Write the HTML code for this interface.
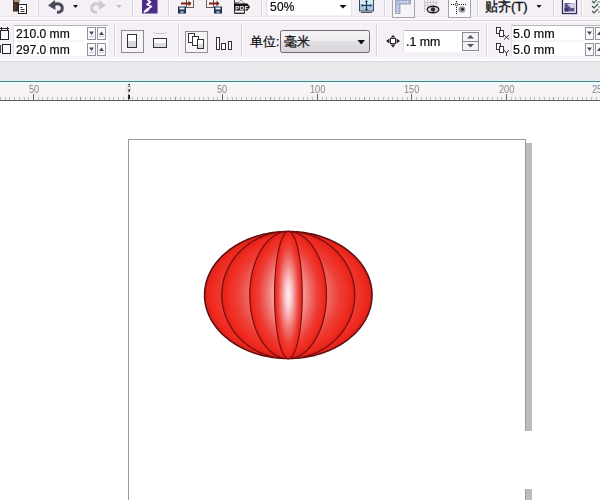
<!DOCTYPE html>
<html><head><meta charset="utf-8">
<style>
*{margin:0;padding:0;box-sizing:border-box}
html,body{width:600px;height:500px;overflow:hidden;background:#fff;font-family:"Liberation Sans",sans-serif}
.abs{position:absolute}
.t{position:absolute;white-space:nowrap;color:#0a0a0a;line-height:1;-webkit-text-stroke:0.2px #0a0a0a}
.rl{position:absolute;font-size:10px;color:#888;top:84.5px;line-height:10px;transform:scaleX(0.92);transform-origin:0 0}
</style></head><body>
<!-- toolbar backgrounds -->
<div class="abs" style="left:0;top:0;width:600px;height:62px;background:#f4f0f5"></div>
<div class="abs" style="left:0;top:16px;width:600px;height:1px;background:#ebe7ec"></div>
<div class="abs" style="left:0;top:17px;width:600px;height:3px;background:#f8f6f9"></div>
<div class="abs" style="left:0;top:20px;width:600px;height:1px;background:#d9d5db"></div>
<div class="abs" style="left:0;top:21px;width:600px;height:1px;background:#fcfbfd"></div>
<div class="abs" style="left:0;top:57px;width:600px;height:1px;background:#fcfbfd"></div>
<div class="abs" style="left:0;top:59px;width:600px;height:2px;background:#fcfbfd"></div>
<div class="abs" style="left:0;top:61px;width:600px;height:1px;background:#dcd8dd"></div>
<div class="abs" style="left:0;top:62px;width:600px;height:19px;background:linear-gradient(#ebe9ea,#eae8ec 55%,#e5ebf0)"></div>
<div class="abs" style="left:0;top:81px;width:600px;height:1px;background:#3c8c8a"></div>
<div class="abs" style="left:0;top:82px;width:600px;height:18px;background:linear-gradient(#f0fafc,#f9f3f7 40%,#f6f1f5)"></div>
<div class="abs" style="left:0;top:100px;width:600px;height:1px;background:#606060"></div>

<svg class="abs" style="left:0;top:0" width="600" height="62" viewBox="0 0 600 62">
<g shape-rendering="crispEdges">
<!-- row1 separators -->
<rect x="37" y="0" width="1" height="16" fill="#fbfafc"/><rect x="38" y="0" width="1" height="16" fill="#d9d5dd"/>
<rect x="132" y="0" width="1" height="16" fill="#d9d5dd"/><rect x="133" y="0" width="1" height="16" fill="#fff"/>
<rect x="168" y="0" width="1" height="16" fill="#d9d5dd"/><rect x="169" y="0" width="1" height="16" fill="#fff"/>
<rect x="261" y="0" width="1" height="16" fill="#d9d5dd"/><rect x="262" y="0" width="1" height="16" fill="#fff"/>
<rect x="384" y="0" width="1" height="16" fill="#d9d5dd"/><rect x="385" y="0" width="1" height="16" fill="#fff"/>
<rect x="477" y="0" width="1" height="16" fill="#d9d5dd"/><rect x="478" y="0" width="1" height="16" fill="#fff"/>
<rect x="553" y="0" width="1" height="16" fill="#d9d5dd"/><rect x="554" y="0" width="1" height="16" fill="#fff"/>
<rect x="581" y="0" width="1" height="16" fill="#d9d5dd"/><rect x="582" y="0" width="1" height="16" fill="#fff"/>
<!-- row2 separators -->
<rect x="114" y="23" width="1" height="34" fill="#d9d5dd"/><rect x="115" y="23" width="1" height="34" fill="#fff"/>
<rect x="178" y="23" width="1" height="34" fill="#d9d5dd"/><rect x="179" y="23" width="1" height="34" fill="#fff"/>
<rect x="241" y="23" width="1" height="34" fill="#d9d5dd"/><rect x="242" y="23" width="1" height="34" fill="#fff"/>
<rect x="376" y="23" width="1" height="34" fill="#d9d5dd"/><rect x="377" y="23" width="1" height="34" fill="#fff"/>
<rect x="486" y="23" width="1" height="34" fill="#d9d5dd"/><rect x="487" y="23" width="1" height="34" fill="#fff"/>
</g>

<!-- paste icon -->
<rect x="13" y="0" width="6" height="11.5" fill="#3e2a22"/>
<rect x="14" y="0" width="6" height="2" fill="#a8987a"/>
<rect x="14" y="4" width="2" height="6" fill="#5a3a2e"/>
<rect x="18.5" y="4.5" width="8" height="9" fill="#fff" stroke="#222" stroke-width="1"/>
<rect x="20.5" y="7" width="2" height="1" fill="#333"/>
<rect x="20.5" y="9" width="4" height="1" fill="#333"/>
<rect x="20.5" y="11" width="4" height="1" fill="#333"/>

<!-- undo -->
<path d="M54 4.8 C57 3 62 3.5 62.3 8 C62.5 11 60 12.5 57 12.3" stroke="#4b4a5c" stroke-width="3" fill="none"/>
<path d="M48 5.5 L55 0 L55.5 10 Z" fill="#4b4a5c"/>
<path d="M73 5 L78 5 L75.5 8 Z" fill="#111"/>
<!-- redo gray -->
<path d="M100 4.8 C97 3 92 3.5 91.7 8 C91.5 11 94 12.5 97 12.3" stroke="#cdcad2" stroke-width="3" fill="none"/>
<path d="M106 5.5 L99 0 L98.5 10 Z" fill="#cdcad2"/>
<path d="M116.5 5 L121.5 5 L119 8 Z" fill="#bdbac2"/>

<!-- purple icon -->
<rect x="142" y="0" width="15.5" height="13.5" fill="#4d2a86"/>
<path d="M147.5 0 L150.5 2 L147 4.5 L151.5 6.5 L146 10 L144 12.5" fill="none" stroke="#fff" stroke-width="1.6" stroke-linejoin="round"/>
<path d="M143 12.5 L150 8.5 L148 11.5 Z" fill="#fff"/>

<!-- import -->
<rect x="186.5" y="-1" width="7" height="8.5" fill="#f8f4f4" stroke="#6a5a5a" stroke-width="1"/>
<path d="M181 2.5 L188.5 2.5 L188.5 0.5 L191.5 3.5 L188.5 6.5 L188.5 4.5 L181 4.5 Z" fill="#7a2416"/>
<rect x="178" y="6.5" width="8" height="7" fill="#1e3058"/>
<rect x="179.5" y="7.5" width="5" height="2" fill="#e8eef8"/>
<rect x="180.5" y="11" width="3" height="2" fill="#9aa8c0"/>
<!-- export -->
<rect x="206.5" y="-1" width="7" height="8.5" fill="#f8f4f4" stroke="#6a5a5a" stroke-width="1"/>
<path d="M209 2.5 L216.5 2.5 L216.5 0.5 L219.5 3.5 L216.5 6.5 L216.5 4.5 L209 4.5 Z" fill="#7a2416"/>
<rect x="214" y="6.5" width="8" height="7" fill="#1e3058"/>
<rect x="215.5" y="7.5" width="5" height="2" fill="#e8eef8"/>
<rect x="216.5" y="11" width="3" height="2" fill="#9aa8c0"/>
<!-- pdf -->
<path d="M234.5 -1 L234.5 13.5 L244.5 13.5 L244.5 10 M234.5 3 L238 3 L241 0 L245 4" fill="none" stroke="#2a2a2a" stroke-width="0.9"/>
<path d="M238 3 L241 0 L244 3 Z" fill="#f0f0f0" stroke="#999" stroke-width="0.5"/>
<path d="M234 3.5 L247.5 3.5 L250 7 L247.5 10.5 L234 10.5 Z" fill="#141414"/>
<text x="235.3" y="9.6" font-family="Liberation Sans" font-weight="bold" font-size="6" fill="#fff" letter-spacing="0.4">PDF</text>
<rect x="235" y="11" width="9" height="1.6" fill="#fff"/>
<rect x="234.5" y="12.6" width="10" height="1" fill="#2a2a2a"/>

<!-- zoom combo -->
<rect x="268" y="0" width="83" height="16" fill="#fff"/>
<rect x="266.5" y="-1" width="85" height="17" fill="none" stroke="#e6e3e8" stroke-width="1"/>
<path d="M339.5 5 L346.5 5 L343 8.5 Z" fill="#111"/>

<!-- crosshair icon -->
<rect x="359.5" y="0" width="14" height="11" fill="#a9c8dc" stroke="#3a4a5a" stroke-width="1"/>
<rect x="360" y="0" width="13" height="4" fill="#d8e8f2"/>
<path d="M362 5.5 L371 5.5 M366.5 1 L366.5 10" stroke="#1a3a5a" stroke-width="1.2"/>
<path d="M361 5.5 L363 4 L363 7 Z M372 5.5 L370 4 L370 7 Z M366.5 0 L365 2 L368 2 Z M366.5 11 L365 9 L368 9 Z" fill="#1a3a5a"/>
<rect x="361" y="12" width="11" height="1" fill="#555"/>

<!-- pressed btn ruler -->
<rect x="392.5" y="-1" width="22" height="18.5" fill="#f7f4f8" stroke="#a6a3aa" stroke-width="1"/>
<path d="M395.5 0 L395.5 13.5 L400 13.5 L400 4 L410.5 4 L410.5 0 Z" fill="#b2bed8" stroke="#7d8bab" stroke-width="0.7"/>
<g fill="#e8ecf6"><rect x="401" y="1" width="1" height="2"/><rect x="404" y="1" width="1" height="2"/><rect x="407" y="1" width="1" height="2"/><rect x="396.5" y="6" width="2" height="1"/><rect x="396.5" y="9" width="2" height="1"/><rect x="396.5" y="12" width="2" height="1"/></g>
<!-- eye -->
<g fill="#c8c6ce"><rect x="424" y="0" width="1" height="12"/><rect x="427" y="0" width="1" height="6"/><rect x="430" y="0" width="1" height="5"/><rect x="433" y="0" width="1" height="5"/><rect x="436" y="0" width="1" height="5"/><rect x="424" y="2" width="14" height="1"/><rect x="424" y="5" width="5" height="1"/><rect x="424" y="8" width="2" height="1"/></g>
<ellipse cx="433" cy="9.5" rx="5.8" ry="3.3" fill="#d8d8dc" stroke="#1e1e1e" stroke-width="1.4"/>
<circle cx="433" cy="9.5" r="2.2" fill="#2a2a2a"/>
<!-- pressed btn dotted -->
<rect x="448.5" y="-1" width="22" height="18.5" fill="#fbfafc" stroke="#a6a3aa" stroke-width="1"/>
<g fill="#1a1a1a"><rect x="451" y="4" width="1" height="1"/><rect x="453" y="4" width="1" height="1"/><rect x="459" y="4" width="1" height="1"/><rect x="461" y="4" width="1" height="1"/><rect x="463" y="4" width="1" height="1"/><rect x="465" y="4" width="1" height="1"/>
<rect x="456" y="1" width="1" height="1"/><rect x="456" y="7" width="1" height="1"/><rect x="456" y="9" width="1" height="1"/><rect x="456" y="11" width="1" height="1"/><rect x="456" y="13" width="1" height="1"/></g>
<circle cx="456.5" cy="4.5" r="1.3" fill="none" stroke="#222" stroke-width="0.8"/>
<circle cx="462" cy="9.5" r="3.3" fill="#9a9a9e" filter="url(#sb)"/>
<circle cx="462.5" cy="9.3" r="1.4" fill="#1a1a1a" filter="url(#sb)"/>
<defs><filter id="sb"><feGaussianBlur stdDeviation="0.6"/></filter></defs>
<!-- dropdown of snap -->
<path d="M536.5 5 L541.5 5 L539 8 Z" fill="#111"/>
<!-- purple image icon -->
<rect x="562.5" y="-1" width="14" height="14.5" fill="#fff" stroke="#2e2a5a" stroke-width="1.3"/>
<rect x="564.5" y="3" width="10" height="8.5" fill="#5a5690"/>
<path d="M567 4 L574.5 3 L574.5 8 L571 8 Z" fill="#d4d4ea"/>
<rect x="564.5" y="8" width="4" height="3.5" fill="#3e3a70"/>
<!-- green checklist -->
<g stroke="#3c5a44" stroke-width="1.1" fill="none">
<path d="M592 1 L594 3 L597 -1"/><path d="M592 6 L594 8 L598 4"/><path d="M592 11 L594 13 L598 9"/></g>
<g fill="#6a8a70"><rect x="597" y="1.5" width="3" height="1"/><rect x="598" y="6.5" width="2" height="1"/><rect x="598" y="11.5" width="2" height="1"/></g>

<!-- ROW2 -->
<!-- page size icons -->
<rect x="0.5" y="30.5" width="8" height="9" fill="#f8f7fb" stroke="#222" stroke-width="1"/>
<rect x="0" y="28" width="9" height="1" fill="#222"/>
<rect x="1" y="27" width="1" height="3" fill="#222"/><rect x="7" y="27" width="1" height="3" fill="#222"/>
<rect x="2.5" y="44.5" width="8" height="9" fill="#f8f7fb" stroke="#222" stroke-width="1"/>
<rect x="0" y="45" width="1" height="8" fill="#444"/>

<!-- size fields -->
<rect x="13" y="25" width="95" height="31" fill="#fff"/>
<rect x="13" y="25" width="95" height="1" fill="#b8b6ba"/>
<rect x="13" y="25" width="1" height="31" fill="#e4e2e6"/>
<rect x="14" y="40.5" width="70" height="1" fill="#f0eef2"/>
<!-- spin boxes -->
<g fill="#fbfbfd" stroke="#94939c" stroke-width="1">
<rect x="87.5" y="27.5" width="8" height="12"/><rect x="97.5" y="27.5" width="8" height="12"/>
<rect x="87.5" y="43.5" width="8" height="12"/><rect x="97.5" y="43.5" width="8" height="12"/>
</g>
<g fill="#4a4a5c">
<path d="M89 31.5 L94 31.5 L91.5 35 Z"/><path d="M99 35 L104 35 L101.5 31.5 Z"/>
<path d="M89 47.5 L94 47.5 L91.5 51 Z"/><path d="M99 51 L104 51 L101.5 47.5 Z"/>
</g>
<g fill="#c8c8d4"><rect x="89" y="36" width="5" height="1"/><rect x="99" y="36" width="5" height="1"/><rect x="89" y="52" width="5" height="1"/><rect x="99" y="52" width="5" height="1"/></g>

<!-- portrait pressed -->
<rect x="121.5" y="30.5" width="22" height="22" fill="#f7f4f8" stroke="#8e8c92" stroke-width="1"/>
<rect x="127.5" y="34.5" width="9" height="13" fill="#fff" stroke="#333" stroke-width="1"/>
<rect x="128" y="41" width="8" height="6" fill="#d8d8e0"/>
<!-- landscape -->
<rect x="153.5" y="38.5" width="13" height="9" fill="#fff" stroke="#333" stroke-width="1"/>
<rect x="154" y="43" width="12" height="4" fill="#dcdce4"/>
<g fill="#c8c8d0"><rect x="154" y="32" width="1" height="2"/><rect x="165" y="32" width="1" height="2"/><rect x="156" y="33" width="8" height="1"/></g>

<!-- pages pressed -->
<rect x="185.5" y="31.5" width="22" height="21" fill="#f7f4f8" stroke="#8e8c92" stroke-width="1"/>
<rect x="188.5" y="33.5" width="6" height="9" fill="#fff" stroke="#333" stroke-width="1"/>
<rect x="192.5" y="36.5" width="6" height="9" fill="#fff" stroke="#333" stroke-width="1"/>
<rect x="197.5" y="39.5" width="6" height="9" fill="#fff" stroke="#333" stroke-width="1"/>
<rect x="198" y="44" width="5" height="4" fill="#d8d8e0"/>
<!-- bars -->
<g fill="#fff" stroke="#333" stroke-width="1">
<rect x="216.5" y="37.5" width="3" height="12"/><rect x="221.5" y="43.5" width="4" height="6"/><rect x="228.5" y="41.5" width="3" height="8"/></g>

<!-- units combo -->
<rect x="280.5" y="30.5" width="89" height="22" rx="2" ry="2" fill="url(#cg)" stroke="#6c6a70" stroke-width="1"/>
<defs><linearGradient id="cg" x1="0" y1="0" x2="0" y2="1"><stop offset="0" stop-color="#f6f4f6"/><stop offset="0.45" stop-color="#efedf0"/><stop offset="0.5" stop-color="#e2e0e3"/><stop offset="1" stop-color="#d6d4d8"/></linearGradient></defs>
<path d="M357.5 40 L365 40 L361.25 44.5 Z" fill="#111"/>

<!-- nudge icon -->
<rect x="390.5" y="38.5" width="5" height="5" fill="#fff" stroke="#333" stroke-width="1"/>
<g fill="#222"><path d="M393 35 L390.5 37.5 L395.5 37.5 Z"/><path d="M393 47.5 L390.5 44.5 L395.5 44.5 Z"/><path d="M386 41 L389.5 38.5 L389.5 43.5 Z"/><path d="M400 41 L396.5 38.5 L396.5 43.5 Z"/></g>

<!-- nudge field -->
<rect x="403" y="30" width="77" height="22" fill="#fff"/>
<rect x="403" y="30" width="77" height="1" fill="#b8b6ba"/>
<rect x="403" y="30" width="1" height="22" fill="#e4e2e6"/>
<rect x="462.5" y="32.5" width="16" height="18" fill="#f3f2f5" stroke="#8a8890" stroke-width="1"/>
<rect x="463" y="41" width="15" height="1" fill="#8a8890"/>
<path d="M467 38.5 L474 38.5 L470.5 35 Z" fill="#555"/>
<path d="M467 44 L474 44 L470.5 47.5 Z" fill="#555"/>

<!-- dup icons -->
<g fill="#fff" stroke="#222" stroke-width="0.9">
<rect x="496.5" y="27.5" width="4" height="6"/><rect x="499.5" y="30.5" width="4" height="6"/>
<rect x="496.5" y="43.5" width="4" height="6"/><rect x="499.5" y="46.5" width="4" height="6"/></g>
<path d="M504 35 L509 39.5 M509 35 L504 39.5" stroke="#222" stroke-width="0.9" fill="none"/>
<path d="M504 50 L506.5 53 L509 50 M506.5 53 L506.5 56" stroke="#222" stroke-width="0.9" fill="none"/>

<!-- dup fields -->
<rect x="511" y="25" width="89" height="31" fill="#fff"/>
<rect x="511" y="25" width="89" height="1" fill="#b8b6ba"/>
<rect x="511" y="25" width="1" height="31" fill="#e4e2e6"/>
<rect x="512" y="40.5" width="72" height="1" fill="#f0eef2"/>
<g fill="#fbfbfd" stroke="#94939c" stroke-width="1">
<rect x="585.5" y="27.5" width="8" height="12"/><rect x="595.5" y="27.5" width="8" height="12"/>
<rect x="585.5" y="43.5" width="8" height="12"/><rect x="595.5" y="43.5" width="8" height="12"/>
</g>
<g fill="#4a4a5c">
<path d="M587 31.5 L592 31.5 L589.5 35 Z"/><path d="M597 35 L602 35 L599.5 31.5 Z"/>
<path d="M587 47.5 L592 47.5 L589.5 51 Z"/><path d="M597 51 L602 51 L599.5 47.5 Z"/>
</g>
</svg>

<!-- texts -->
<div class="t" style="left:269.5px;top:0px;font-size:13px;transform:scaleX(0.92);transform-origin:0 0;letter-spacing:0.3px">50%</div>
<div class="t" style="left:485px;top:0px;font-size:13px;-webkit-text-stroke:0.35px #151515">贴齐(T)</div>
<div class="t" style="left:15.5px;top:27px;font-size:13px;transform:scale(0.93,1.04);transform-origin:0 0">210.0 mm</div>
<div class="t" style="left:15.5px;top:42.5px;font-size:13px;transform:scale(0.93,1.04);transform-origin:0 0">297.0 mm</div>
<div class="t" style="left:250px;top:35.5px;font-size:12.5px;-webkit-text-stroke:0.25px #151515">单位:</div>
<div class="t" style="left:284px;top:35.5px;font-size:12.5px;-webkit-text-stroke:0.25px #151515">毫米</div>
<div class="t" style="left:406px;top:34.5px;font-size:13px;transform:scale(0.95,1.04);transform-origin:0 0">.1 mm</div>
<div class="t" style="left:513px;top:27px;font-size:13px;transform:scale(0.96,1.04);transform-origin:0 0">5.0 mm</div>
<div class="t" style="left:513px;top:42.5px;font-size:13px;transform:scale(0.96,1.04);transform-origin:0 0">5.0 mm</div>

<!-- ruler -->
<svg class="abs" style="left:0;top:82px" width="600" height="19" viewBox="0 0 600 19">
<g shape-rendering="crispEdges">
<rect x="0" y="15" width="1" height="3" fill="#bdbdbd"/>
<rect x="5" y="15" width="1" height="3" fill="#bdbdbd"/>
<rect x="9" y="15" width="1" height="3" fill="#bdbdbd"/>
<rect x="14" y="15" width="1" height="3" fill="#bdbdbd"/>
<rect x="19" y="15" width="1" height="3" fill="#bdbdbd"/>
<rect x="24" y="15" width="1" height="3" fill="#bdbdbd"/>
<rect x="28" y="15" width="1" height="3" fill="#bdbdbd"/>
<rect x="33" y="12" width="1" height="6" fill="#6a6a6a"/>
<rect x="38" y="15" width="1" height="3" fill="#bdbdbd"/>
<rect x="42" y="15" width="1" height="3" fill="#bdbdbd"/>
<rect x="47" y="15" width="1" height="3" fill="#bdbdbd"/>
<rect x="52" y="15" width="1" height="3" fill="#bdbdbd"/>
<rect x="57" y="15" width="1" height="3" fill="#bdbdbd"/>
<rect x="61" y="15" width="1" height="3" fill="#bdbdbd"/>
<rect x="66" y="15" width="1" height="3" fill="#bdbdbd"/>
<rect x="71" y="15" width="1" height="3" fill="#bdbdbd"/>
<rect x="76" y="15" width="1" height="3" fill="#bdbdbd"/>
<rect x="80" y="15" width="1" height="3" fill="#999"/>
<rect x="85" y="15" width="1" height="3" fill="#bdbdbd"/>
<rect x="90" y="15" width="1" height="3" fill="#bdbdbd"/>
<rect x="94" y="15" width="1" height="3" fill="#bdbdbd"/>
<rect x="99" y="15" width="1" height="3" fill="#bdbdbd"/>
<rect x="104" y="15" width="1" height="3" fill="#bdbdbd"/>
<rect x="109" y="15" width="1" height="3" fill="#bdbdbd"/>
<rect x="113" y="15" width="1" height="3" fill="#bdbdbd"/>
<rect x="118" y="15" width="1" height="3" fill="#bdbdbd"/>
<rect x="123" y="15" width="1" height="3" fill="#bdbdbd"/>
<rect x="128" y="12" width="1" height="6" fill="#6a6a6a"/>
<rect x="132" y="15" width="1" height="3" fill="#bdbdbd"/>
<rect x="137" y="15" width="1" height="3" fill="#bdbdbd"/>
<rect x="142" y="15" width="1" height="3" fill="#bdbdbd"/>
<rect x="147" y="15" width="1" height="3" fill="#bdbdbd"/>
<rect x="151" y="15" width="1" height="3" fill="#bdbdbd"/>
<rect x="156" y="15" width="1" height="3" fill="#bdbdbd"/>
<rect x="161" y="15" width="1" height="3" fill="#bdbdbd"/>
<rect x="165" y="15" width="1" height="3" fill="#bdbdbd"/>
<rect x="170" y="15" width="1" height="3" fill="#bdbdbd"/>
<rect x="175" y="15" width="1" height="3" fill="#999"/>
<rect x="180" y="15" width="1" height="3" fill="#bdbdbd"/>
<rect x="184" y="15" width="1" height="3" fill="#bdbdbd"/>
<rect x="189" y="15" width="1" height="3" fill="#bdbdbd"/>
<rect x="194" y="15" width="1" height="3" fill="#bdbdbd"/>
<rect x="199" y="15" width="1" height="3" fill="#bdbdbd"/>
<rect x="203" y="15" width="1" height="3" fill="#bdbdbd"/>
<rect x="208" y="15" width="1" height="3" fill="#bdbdbd"/>
<rect x="213" y="15" width="1" height="3" fill="#bdbdbd"/>
<rect x="217" y="15" width="1" height="3" fill="#bdbdbd"/>
<rect x="222" y="12" width="1" height="6" fill="#6a6a6a"/>
<rect x="227" y="15" width="1" height="3" fill="#bdbdbd"/>
<rect x="232" y="15" width="1" height="3" fill="#bdbdbd"/>
<rect x="236" y="15" width="1" height="3" fill="#bdbdbd"/>
<rect x="241" y="15" width="1" height="3" fill="#bdbdbd"/>
<rect x="246" y="15" width="1" height="3" fill="#bdbdbd"/>
<rect x="251" y="15" width="1" height="3" fill="#bdbdbd"/>
<rect x="255" y="15" width="1" height="3" fill="#bdbdbd"/>
<rect x="260" y="15" width="1" height="3" fill="#bdbdbd"/>
<rect x="265" y="15" width="1" height="3" fill="#bdbdbd"/>
<rect x="270" y="15" width="1" height="3" fill="#999"/>
<rect x="274" y="15" width="1" height="3" fill="#bdbdbd"/>
<rect x="279" y="15" width="1" height="3" fill="#bdbdbd"/>
<rect x="284" y="15" width="1" height="3" fill="#bdbdbd"/>
<rect x="288" y="15" width="1" height="3" fill="#bdbdbd"/>
<rect x="293" y="15" width="1" height="3" fill="#bdbdbd"/>
<rect x="298" y="15" width="1" height="3" fill="#bdbdbd"/>
<rect x="303" y="15" width="1" height="3" fill="#bdbdbd"/>
<rect x="307" y="15" width="1" height="3" fill="#bdbdbd"/>
<rect x="312" y="15" width="1" height="3" fill="#bdbdbd"/>
<rect x="317" y="12" width="1" height="6" fill="#6a6a6a"/>
<rect x="322" y="15" width="1" height="3" fill="#bdbdbd"/>
<rect x="326" y="15" width="1" height="3" fill="#bdbdbd"/>
<rect x="331" y="15" width="1" height="3" fill="#bdbdbd"/>
<rect x="336" y="15" width="1" height="3" fill="#bdbdbd"/>
<rect x="340" y="15" width="1" height="3" fill="#bdbdbd"/>
<rect x="345" y="15" width="1" height="3" fill="#bdbdbd"/>
<rect x="350" y="15" width="1" height="3" fill="#bdbdbd"/>
<rect x="355" y="15" width="1" height="3" fill="#bdbdbd"/>
<rect x="359" y="15" width="1" height="3" fill="#bdbdbd"/>
<rect x="364" y="15" width="1" height="3" fill="#999"/>
<rect x="369" y="15" width="1" height="3" fill="#bdbdbd"/>
<rect x="374" y="15" width="1" height="3" fill="#bdbdbd"/>
<rect x="378" y="15" width="1" height="3" fill="#bdbdbd"/>
<rect x="383" y="15" width="1" height="3" fill="#bdbdbd"/>
<rect x="388" y="15" width="1" height="3" fill="#bdbdbd"/>
<rect x="392" y="15" width="1" height="3" fill="#bdbdbd"/>
<rect x="397" y="15" width="1" height="3" fill="#bdbdbd"/>
<rect x="402" y="15" width="1" height="3" fill="#bdbdbd"/>
<rect x="407" y="15" width="1" height="3" fill="#bdbdbd"/>
<rect x="411" y="12" width="1" height="6" fill="#6a6a6a"/>
<rect x="416" y="15" width="1" height="3" fill="#bdbdbd"/>
<rect x="421" y="15" width="1" height="3" fill="#bdbdbd"/>
<rect x="426" y="15" width="1" height="3" fill="#bdbdbd"/>
<rect x="430" y="15" width="1" height="3" fill="#bdbdbd"/>
<rect x="435" y="15" width="1" height="3" fill="#bdbdbd"/>
<rect x="440" y="15" width="1" height="3" fill="#bdbdbd"/>
<rect x="445" y="15" width="1" height="3" fill="#bdbdbd"/>
<rect x="449" y="15" width="1" height="3" fill="#bdbdbd"/>
<rect x="454" y="15" width="1" height="3" fill="#bdbdbd"/>
<rect x="459" y="15" width="1" height="3" fill="#999"/>
<rect x="463" y="15" width="1" height="3" fill="#bdbdbd"/>
<rect x="468" y="15" width="1" height="3" fill="#bdbdbd"/>
<rect x="473" y="15" width="1" height="3" fill="#bdbdbd"/>
<rect x="478" y="15" width="1" height="3" fill="#bdbdbd"/>
<rect x="482" y="15" width="1" height="3" fill="#bdbdbd"/>
<rect x="487" y="15" width="1" height="3" fill="#bdbdbd"/>
<rect x="492" y="15" width="1" height="3" fill="#bdbdbd"/>
<rect x="497" y="15" width="1" height="3" fill="#bdbdbd"/>
<rect x="501" y="15" width="1" height="3" fill="#bdbdbd"/>
<rect x="506" y="12" width="1" height="6" fill="#6a6a6a"/>
<rect x="511" y="15" width="1" height="3" fill="#bdbdbd"/>
<rect x="515" y="15" width="1" height="3" fill="#bdbdbd"/>
<rect x="520" y="15" width="1" height="3" fill="#bdbdbd"/>
<rect x="525" y="15" width="1" height="3" fill="#bdbdbd"/>
<rect x="530" y="15" width="1" height="3" fill="#bdbdbd"/>
<rect x="534" y="15" width="1" height="3" fill="#bdbdbd"/>
<rect x="539" y="15" width="1" height="3" fill="#bdbdbd"/>
<rect x="544" y="15" width="1" height="3" fill="#bdbdbd"/>
<rect x="549" y="15" width="1" height="3" fill="#bdbdbd"/>
<rect x="553" y="15" width="1" height="3" fill="#999"/>
<rect x="558" y="15" width="1" height="3" fill="#bdbdbd"/>
<rect x="563" y="15" width="1" height="3" fill="#bdbdbd"/>
<rect x="567" y="15" width="1" height="3" fill="#bdbdbd"/>
<rect x="572" y="15" width="1" height="3" fill="#bdbdbd"/>
<rect x="577" y="15" width="1" height="3" fill="#bdbdbd"/>
<rect x="582" y="15" width="1" height="3" fill="#bdbdbd"/>
<rect x="586" y="15" width="1" height="3" fill="#bdbdbd"/>
<rect x="591" y="15" width="1" height="3" fill="#bdbdbd"/>
<rect x="596" y="15" width="1" height="3" fill="#bdbdbd"/>
</g>
<g fill="#111"><rect x="128.5" y="2" width="1.5" height="3"/><rect x="128.5" y="7" width="1.5" height="3"/><rect x="128.5" y="13" width="1.5" height="4"/></g>
</svg>
<div class="rl" style="left:29px">50</div>
<div class="rl" style="left:126px;color:#e0d0d8">0</div>
<div class="rl" style="left:217px">50</div>
<div class="rl" style="left:310px">100</div>
<div class="rl" style="left:404px">150</div>
<div class="rl" style="left:499px">200</div>
<div class="rl" style="left:592px">25</div>

<!-- page -->
<div class="abs" style="left:128px;top:139px;width:398px;height:400px;border:1px solid #9a9a9a;background:#fff"></div>
<div class="abs" style="left:526px;top:143px;width:6px;height:400px;background:#bcbcbc"></div>
<div class="abs" style="left:440px;top:431px;width:160px;height:58px;background:#fff"></div>

<svg class="abs" style="left:0;top:0" width="600" height="500" viewBox="0 0 600 500">
<defs>
<radialGradient id="g" cx="0.5" cy="0.5" r="0.5">
<stop offset="0" stop-color="#fff0f4"/>
<stop offset="0.2" stop-color="#fcd0d4"/>
<stop offset="0.38" stop-color="#f5a0a0"/>
<stop offset="0.58" stop-color="#ef6c68"/>
<stop offset="0.78" stop-color="#ee3c34"/>
<stop offset="0.92" stop-color="#f02a20"/>
<stop offset="0.97" stop-color="#e4261e"/>
<stop offset="1" stop-color="#b81a16"/>
</radialGradient>
</defs>
<filter id="bl" x="-10%" y="-10%" width="120%" height="120%"><feGaussianBlur stdDeviation="0.35"/></filter>
<g filter="url(#bl)">
<g stroke="#760a0a" stroke-width="1.05">
<path d="M372.10 295.00 L372.07 296.66 L371.99 298.33 L371.84 299.99 L371.64 301.65 L371.38 303.30 L371.07 304.95 L370.70 306.59 L370.27 308.22 L369.78 309.85 L369.24 311.46 L368.65 313.06 L368.00 314.65 L367.29 316.23 L366.53 317.79 L365.72 319.34 L364.86 320.87 L363.94 322.38 L362.97 323.87 L361.94 325.35 L360.87 326.80 L359.75 328.23 L358.58 329.64 L357.36 331.02 L356.10 332.38 L354.78 333.72 L353.42 335.02 L352.02 336.30 L350.58 337.56 L349.09 338.78 L347.56 339.97 L345.98 341.13 L344.37 342.26 L342.72 343.36 L341.04 344.43 L339.31 345.46 L337.56 346.45 L335.76 347.41 L333.94 348.34 L332.09 349.23 L330.20 350.08 L328.29 350.89 L326.34 351.67 L324.38 352.40 L322.38 353.10 L320.37 353.76 L318.33 354.38 L316.27 354.95 L314.20 355.49 L312.10 355.98 L309.99 356.43 L307.86 356.84 L305.72 357.21 L303.57 357.54 L301.41 357.82 L299.24 358.06 L297.06 358.25 L294.87 358.40 L292.69 358.51 L290.49 358.58 L288.30 358.60 L286.11 358.58 L283.91 358.51 L281.73 358.40 L279.54 358.25 L277.36 358.06 L275.19 357.82 L273.03 357.54 L270.88 357.21 L268.74 356.84 L266.61 356.43 L264.50 355.98 L262.40 355.49 L260.33 354.95 L258.27 354.38 L256.23 353.76 L254.22 353.10 L252.22 352.40 L250.26 351.67 L248.31 350.89 L246.40 350.08 L244.51 349.23 L242.66 348.34 L240.84 347.41 L239.04 346.45 L237.29 345.46 L235.56 344.43 L233.88 343.36 L232.23 342.26 L230.62 341.13 L229.04 339.97 L227.51 338.78 L226.02 337.56 L224.58 336.30 L223.18 335.02 L221.82 333.72 L220.50 332.38 L219.24 331.02 L218.02 329.64 L216.85 328.23 L215.73 326.80 L214.66 325.35 L213.63 323.87 L212.66 322.38 L211.74 320.87 L210.88 319.34 L210.07 317.79 L209.31 316.23 L208.60 314.65 L207.95 313.06 L207.36 311.46 L206.82 309.85 L206.33 308.22 L205.90 306.59 L205.53 304.95 L205.22 303.30 L204.96 301.65 L204.76 299.99 L204.61 298.33 L204.53 296.66 L204.50 295.00 L204.53 293.34 L204.61 291.67 L204.76 290.01 L204.96 288.35 L205.22 286.70 L205.53 285.05 L205.90 283.41 L206.33 281.78 L206.82 280.15 L207.36 278.54 L207.95 276.94 L208.60 275.35 L209.31 273.77 L210.07 272.21 L210.88 270.66 L211.74 269.13 L212.66 267.62 L213.63 266.13 L214.66 264.65 L215.73 263.20 L216.85 261.77 L218.02 260.36 L219.24 258.98 L220.50 257.62 L221.82 256.28 L223.18 254.98 L224.58 253.70 L226.02 252.44 L227.51 251.22 L229.04 250.03 L230.62 248.87 L232.23 247.74 L233.88 246.64 L235.56 245.57 L237.29 244.54 L239.04 243.55 L240.84 242.59 L242.66 241.66 L244.51 240.77 L246.40 239.92 L248.31 239.11 L250.26 238.33 L252.22 237.60 L254.22 236.90 L256.23 236.24 L258.27 235.62 L260.33 235.05 L262.40 234.51 L264.50 234.02 L266.61 233.57 L268.74 233.16 L270.88 232.79 L273.03 232.46 L275.19 232.18 L277.36 231.94 L279.54 231.75 L281.73 231.60 L283.91 231.49 L286.11 231.42 L288.30 231.40 L290.49 231.42 L292.69 231.49 L294.87 231.60 L297.06 231.75 L299.24 231.94 L301.41 232.18 L303.57 232.46 L305.72 232.79 L307.86 233.16 L309.99 233.57 L312.10 234.02 L314.20 234.51 L316.27 235.05 L318.33 235.62 L320.37 236.24 L322.38 236.90 L324.38 237.60 L326.34 238.33 L328.29 239.11 L330.20 239.92 L332.09 240.77 L333.94 241.66 L335.76 242.59 L337.56 243.55 L339.31 244.54 L341.04 245.57 L342.72 246.64 L344.37 247.74 L345.98 248.87 L347.56 250.03 L349.09 251.22 L350.58 252.44 L352.02 253.70 L353.42 254.98 L354.78 256.28 L356.10 257.62 L357.36 258.98 L358.58 260.36 L359.75 261.77 L360.87 263.20 L361.94 264.65 L362.97 266.13 L363.94 267.62 L364.86 269.13 L365.72 270.66 L366.53 272.21 L367.29 273.77 L368.00 275.35 L368.65 276.94 L369.24 278.54 L369.78 280.15 L370.27 281.78 L370.70 283.41 L371.07 285.05 L371.38 286.70 L371.64 288.35 L371.84 290.01 L371.99 291.67 L372.07 293.34 Z" fill="url(#g)" stroke="#5a0c0c" stroke-width="1.4"/>
<path d="M354.90 295.00 L354.88 296.66 L354.81 298.33 L354.69 299.99 L354.54 301.65 L354.33 303.30 L354.08 304.95 L353.78 306.59 L353.44 308.22 L353.06 309.85 L352.63 311.46 L352.16 313.06 L351.64 314.65 L351.08 316.23 L350.48 317.79 L349.83 319.34 L349.14 320.87 L348.41 322.38 L347.64 323.87 L346.83 325.35 L345.98 326.80 L345.09 328.23 L344.16 329.64 L343.19 331.02 L342.18 332.38 L341.14 333.72 L340.06 335.02 L338.94 336.30 L337.79 337.56 L336.61 338.78 L335.39 339.97 L334.14 341.13 L332.86 342.26 L331.55 343.36 L330.21 344.43 L328.84 345.46 L327.45 346.45 L326.02 347.41 L324.57 348.34 L323.10 349.23 L321.60 350.08 L320.08 350.89 L318.54 351.67 L316.97 352.40 L315.39 353.10 L313.79 353.76 L312.17 354.38 L310.53 354.95 L308.88 355.49 L307.22 355.98 L305.54 356.43 L303.85 356.84 L302.15 357.21 L300.44 357.54 L298.72 357.82 L296.99 358.06 L295.26 358.25 L293.53 358.40 L291.79 358.51 L290.04 358.58 L288.30 358.60 L286.56 358.58 L284.81 358.51 L283.07 358.40 L281.34 358.25 L279.61 358.06 L277.88 357.82 L276.16 357.54 L274.45 357.21 L272.75 356.84 L271.06 356.43 L269.38 355.98 L267.72 355.49 L266.07 354.95 L264.43 354.38 L262.81 353.76 L261.21 353.10 L259.63 352.40 L258.06 351.67 L256.52 350.89 L255.00 350.08 L253.50 349.23 L252.03 348.34 L250.58 347.41 L249.15 346.45 L247.76 345.46 L246.39 344.43 L245.05 343.36 L243.74 342.26 L242.46 341.13 L241.21 339.97 L239.99 338.78 L238.81 337.56 L237.66 336.30 L236.54 335.02 L235.46 333.72 L234.42 332.38 L233.41 331.02 L232.44 329.64 L231.51 328.23 L230.62 326.80 L229.77 325.35 L228.96 323.87 L228.19 322.38 L227.46 320.87 L226.77 319.34 L226.12 317.79 L225.52 316.23 L224.96 314.65 L224.44 313.06 L223.97 311.46 L223.54 309.85 L223.16 308.22 L222.82 306.59 L222.52 304.95 L222.27 303.30 L222.06 301.65 L221.91 299.99 L221.79 298.33 L221.72 296.66 L221.70 295.00 L221.72 293.34 L221.79 291.67 L221.91 290.01 L222.06 288.35 L222.27 286.70 L222.52 285.05 L222.82 283.41 L223.16 281.78 L223.54 280.15 L223.97 278.54 L224.44 276.94 L224.96 275.35 L225.52 273.77 L226.12 272.21 L226.77 270.66 L227.46 269.13 L228.19 267.62 L228.96 266.13 L229.77 264.65 L230.62 263.20 L231.51 261.77 L232.44 260.36 L233.41 258.98 L234.42 257.62 L235.46 256.28 L236.54 254.98 L237.66 253.70 L238.81 252.44 L239.99 251.22 L241.21 250.03 L242.46 248.87 L243.74 247.74 L245.05 246.64 L246.39 245.57 L247.76 244.54 L249.15 243.55 L250.58 242.59 L252.03 241.66 L253.50 240.77 L255.00 239.92 L256.52 239.11 L258.06 238.33 L259.63 237.60 L261.21 236.90 L262.81 236.24 L264.43 235.62 L266.07 235.05 L267.72 234.51 L269.38 234.02 L271.06 233.57 L272.75 233.16 L274.45 232.79 L276.16 232.46 L277.88 232.18 L279.61 231.94 L281.34 231.75 L283.07 231.60 L284.81 231.49 L286.56 231.42 L288.30 231.40 L290.04 231.42 L291.79 231.49 L293.53 231.60 L295.26 231.75 L296.99 231.94 L298.72 232.18 L300.44 232.46 L302.15 232.79 L303.85 233.16 L305.54 233.57 L307.22 234.02 L308.88 234.51 L310.53 235.05 L312.17 235.62 L313.79 236.24 L315.39 236.90 L316.97 237.60 L318.54 238.33 L320.08 239.11 L321.60 239.92 L323.10 240.77 L324.57 241.66 L326.02 242.59 L327.45 243.55 L328.84 244.54 L330.21 245.57 L331.55 246.64 L332.86 247.74 L334.14 248.87 L335.39 250.03 L336.61 251.22 L337.79 252.44 L338.94 253.70 L340.06 254.98 L341.14 256.28 L342.18 257.62 L343.19 258.98 L344.16 260.36 L345.09 261.77 L345.98 263.20 L346.83 264.65 L347.64 266.13 L348.41 267.62 L349.14 269.13 L349.83 270.66 L350.48 272.21 L351.08 273.77 L351.64 275.35 L352.16 276.94 L352.63 278.54 L353.06 280.15 L353.44 281.78 L353.78 283.41 L354.08 285.05 L354.33 286.70 L354.54 288.35 L354.69 290.01 L354.81 291.67 L354.88 293.34 Z" fill="url(#g)"/>
<path d="M326.50 295.00 L326.49 296.66 L326.45 298.33 L326.38 299.99 L326.29 301.65 L326.17 303.30 L326.03 304.95 L325.86 306.59 L325.66 308.22 L325.44 309.85 L325.19 311.46 L324.92 313.06 L324.62 314.65 L324.30 316.23 L323.95 317.79 L323.58 319.34 L323.18 320.87 L322.76 322.38 L322.31 323.87 L321.85 325.35 L321.36 326.80 L320.84 328.23 L320.30 329.64 L319.75 331.02 L319.17 332.38 L318.56 333.72 L317.94 335.02 L317.30 336.30 L316.64 337.56 L315.95 338.78 L315.25 339.97 L314.53 341.13 L313.79 342.26 L313.04 343.36 L312.27 344.43 L311.48 345.46 L310.67 346.45 L309.85 347.41 L309.01 348.34 L308.16 349.23 L307.30 350.08 L306.42 350.89 L305.53 351.67 L304.63 352.40 L303.72 353.10 L302.80 353.76 L301.86 354.38 L300.92 354.95 L299.97 355.49 L299.01 355.98 L298.04 356.43 L297.06 356.84 L296.08 357.21 L295.10 357.54 L294.11 357.82 L293.11 358.06 L292.11 358.25 L291.11 358.40 L290.11 358.51 L289.11 358.58 L288.10 358.60 L287.09 358.58 L286.09 358.51 L285.09 358.40 L284.09 358.25 L283.09 358.06 L282.09 357.82 L281.10 357.54 L280.12 357.21 L279.14 356.84 L278.16 356.43 L277.19 355.98 L276.23 355.49 L275.28 354.95 L274.34 354.38 L273.40 353.76 L272.48 353.10 L271.57 352.40 L270.67 351.67 L269.78 350.89 L268.90 350.08 L268.04 349.23 L267.19 348.34 L266.35 347.41 L265.53 346.45 L264.72 345.46 L263.93 344.43 L263.16 343.36 L262.41 342.26 L261.67 341.13 L260.95 339.97 L260.25 338.78 L259.56 337.56 L258.90 336.30 L258.26 335.02 L257.64 333.72 L257.03 332.38 L256.45 331.02 L255.90 329.64 L255.36 328.23 L254.84 326.80 L254.35 325.35 L253.89 323.87 L253.44 322.38 L253.02 320.87 L252.62 319.34 L252.25 317.79 L251.90 316.23 L251.58 314.65 L251.28 313.06 L251.01 311.46 L250.76 309.85 L250.54 308.22 L250.34 306.59 L250.17 304.95 L250.03 303.30 L249.91 301.65 L249.82 299.99 L249.75 298.33 L249.71 296.66 L249.70 295.00 L249.71 293.34 L249.75 291.67 L249.82 290.01 L249.91 288.35 L250.03 286.70 L250.17 285.05 L250.34 283.41 L250.54 281.78 L250.76 280.15 L251.01 278.54 L251.28 276.94 L251.58 275.35 L251.90 273.77 L252.25 272.21 L252.62 270.66 L253.02 269.13 L253.44 267.62 L253.89 266.13 L254.35 264.65 L254.84 263.20 L255.36 261.77 L255.90 260.36 L256.45 258.98 L257.03 257.62 L257.64 256.28 L258.26 254.98 L258.90 253.70 L259.56 252.44 L260.25 251.22 L260.95 250.03 L261.67 248.87 L262.41 247.74 L263.16 246.64 L263.93 245.57 L264.72 244.54 L265.53 243.55 L266.35 242.59 L267.19 241.66 L268.04 240.77 L268.90 239.92 L269.78 239.11 L270.67 238.33 L271.57 237.60 L272.48 236.90 L273.40 236.24 L274.34 235.62 L275.28 235.05 L276.23 234.51 L277.19 234.02 L278.16 233.57 L279.14 233.16 L280.12 232.79 L281.10 232.46 L282.09 232.18 L283.09 231.94 L284.09 231.75 L285.09 231.60 L286.09 231.49 L287.09 231.42 L288.10 231.40 L289.11 231.42 L290.11 231.49 L291.11 231.60 L292.11 231.75 L293.11 231.94 L294.11 232.18 L295.10 232.46 L296.08 232.79 L297.06 233.16 L298.04 233.57 L299.01 234.02 L299.97 234.51 L300.92 235.05 L301.86 235.62 L302.80 236.24 L303.72 236.90 L304.63 237.60 L305.53 238.33 L306.42 239.11 L307.30 239.92 L308.16 240.77 L309.01 241.66 L309.85 242.59 L310.67 243.55 L311.48 244.54 L312.27 245.57 L313.04 246.64 L313.79 247.74 L314.53 248.87 L315.25 250.03 L315.95 251.22 L316.64 252.44 L317.30 253.70 L317.94 254.98 L318.56 256.28 L319.17 257.62 L319.75 258.98 L320.30 260.36 L320.84 261.77 L321.36 263.20 L321.85 264.65 L322.31 266.13 L322.76 267.62 L323.18 269.13 L323.58 270.66 L323.95 272.21 L324.30 273.77 L324.62 275.35 L324.92 276.94 L325.19 278.54 L325.44 280.15 L325.66 281.78 L325.86 283.41 L326.03 285.05 L326.17 286.70 L326.29 288.35 L326.38 290.01 L326.45 291.67 L326.49 293.34 Z" fill="url(#g)"/>
<path d="M302.30 295.00 L302.30 296.66 L302.28 298.33 L302.26 299.99 L302.22 301.65 L302.18 303.30 L302.13 304.95 L302.07 306.59 L302.00 308.22 L301.92 309.85 L301.83 311.46 L301.73 313.06 L301.62 314.65 L301.50 316.23 L301.38 317.79 L301.24 319.34 L301.10 320.87 L300.95 322.38 L300.78 323.87 L300.62 325.35 L300.44 326.80 L300.25 328.23 L300.06 329.64 L299.86 331.02 L299.65 332.38 L299.43 333.72 L299.20 335.02 L298.97 336.30 L298.73 337.56 L298.48 338.78 L298.23 339.97 L297.97 341.13 L297.70 342.26 L297.43 343.36 L297.15 344.43 L296.86 345.46 L296.57 346.45 L296.27 347.41 L295.97 348.34 L295.66 349.23 L295.35 350.08 L295.03 350.89 L294.71 351.67 L294.38 352.40 L294.05 353.10 L293.72 353.76 L293.38 354.38 L293.04 354.95 L292.70 355.49 L292.35 355.98 L292.00 356.43 L291.64 356.84 L291.29 357.21 L290.93 357.54 L290.57 357.82 L290.21 358.06 L289.85 358.25 L289.49 358.40 L289.13 358.51 L288.76 358.58 L288.40 358.60 L288.04 358.58 L287.67 358.51 L287.31 358.40 L286.95 358.25 L286.59 358.06 L286.23 357.82 L285.87 357.54 L285.51 357.21 L285.16 356.84 L284.80 356.43 L284.45 355.98 L284.10 355.49 L283.76 354.95 L283.42 354.38 L283.08 353.76 L282.75 353.10 L282.42 352.40 L282.09 351.67 L281.77 350.89 L281.45 350.08 L281.14 349.23 L280.83 348.34 L280.53 347.41 L280.23 346.45 L279.94 345.46 L279.65 344.43 L279.37 343.36 L279.10 342.26 L278.83 341.13 L278.57 339.97 L278.32 338.78 L278.07 337.56 L277.83 336.30 L277.60 335.02 L277.37 333.72 L277.15 332.38 L276.94 331.02 L276.74 329.64 L276.55 328.23 L276.36 326.80 L276.18 325.35 L276.02 323.87 L275.85 322.38 L275.70 320.87 L275.56 319.34 L275.42 317.79 L275.30 316.23 L275.18 314.65 L275.07 313.06 L274.97 311.46 L274.88 309.85 L274.80 308.22 L274.73 306.59 L274.67 304.95 L274.62 303.30 L274.58 301.65 L274.54 299.99 L274.52 298.33 L274.50 296.66 L274.50 295.00 L274.50 293.34 L274.52 291.67 L274.54 290.01 L274.58 288.35 L274.62 286.70 L274.67 285.05 L274.73 283.41 L274.80 281.78 L274.88 280.15 L274.97 278.54 L275.07 276.94 L275.18 275.35 L275.30 273.77 L275.42 272.21 L275.56 270.66 L275.70 269.13 L275.85 267.62 L276.02 266.13 L276.18 264.65 L276.36 263.20 L276.55 261.77 L276.74 260.36 L276.94 258.98 L277.15 257.62 L277.37 256.28 L277.60 254.98 L277.83 253.70 L278.07 252.44 L278.32 251.22 L278.57 250.03 L278.83 248.87 L279.10 247.74 L279.37 246.64 L279.65 245.57 L279.94 244.54 L280.23 243.55 L280.53 242.59 L280.83 241.66 L281.14 240.77 L281.45 239.92 L281.77 239.11 L282.09 238.33 L282.42 237.60 L282.75 236.90 L283.08 236.24 L283.42 235.62 L283.76 235.05 L284.10 234.51 L284.45 234.02 L284.80 233.57 L285.16 233.16 L285.51 232.79 L285.87 232.46 L286.23 232.18 L286.59 231.94 L286.95 231.75 L287.31 231.60 L287.67 231.49 L288.04 231.42 L288.40 231.40 L288.76 231.42 L289.13 231.49 L289.49 231.60 L289.85 231.75 L290.21 231.94 L290.57 232.18 L290.93 232.46 L291.29 232.79 L291.64 233.16 L292.00 233.57 L292.35 234.02 L292.70 234.51 L293.04 235.05 L293.38 235.62 L293.72 236.24 L294.05 236.90 L294.38 237.60 L294.71 238.33 L295.03 239.11 L295.35 239.92 L295.66 240.77 L295.97 241.66 L296.27 242.59 L296.57 243.55 L296.86 244.54 L297.15 245.57 L297.43 246.64 L297.70 247.74 L297.97 248.87 L298.23 250.03 L298.48 251.22 L298.73 252.44 L298.97 253.70 L299.20 254.98 L299.43 256.28 L299.65 257.62 L299.86 258.98 L300.06 260.36 L300.25 261.77 L300.44 263.20 L300.62 264.65 L300.78 266.13 L300.95 267.62 L301.10 269.13 L301.24 270.66 L301.38 272.21 L301.50 273.77 L301.62 275.35 L301.73 276.94 L301.83 278.54 L301.92 280.15 L302.00 281.78 L302.07 283.41 L302.13 285.05 L302.18 286.70 L302.22 288.35 L302.26 290.01 L302.28 291.67 L302.30 293.34 Z" fill="url(#g)"/>
</g>
</g>
</svg>
</body></html>
